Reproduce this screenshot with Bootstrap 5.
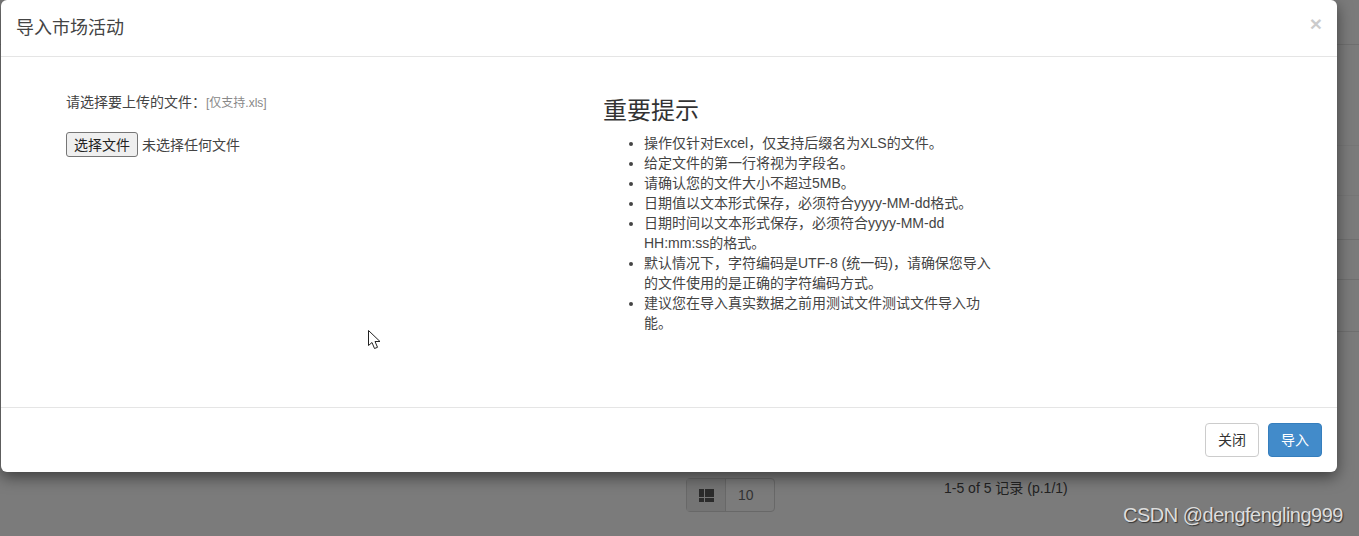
<!DOCTYPE html>
<html lang="zh-CN">
<head>
<meta charset="utf-8">
<title>导入市场活动</title>
<link href="https://cdn.jsdelivr.net/npm/bootstrap@5.3.0/dist/css/bootstrap.min.css" rel="stylesheet">
<style>
html,body{height:536px;overflow:hidden}
body{background:#7b7b7b;font-family:"Liberation Sans","Noto Sans CJK SC",sans-serif;font-size:14px;line-height:20px;color:#333}
.back-page{height:536px}
.back-row{border-bottom:1px solid #6f6f6f}
.back-r1{height:45px}.back-r2{height:101px;border-color:#767676}.back-r3{height:50px;border-color:#767676}.back-r4{height:44px}.back-r5{height:40px}
.back-pager-row{height:252px;border-bottom:0;padding-left:686px;padding-top:198px}
.back-line{height:1px;background:#6f6f6f;margin-top:-201px}
.pager-box{width:89px;height:34px;border:1px solid #686868;border-radius:4px;color:#333;font-size:14px}
.pager-ico{width:39px;border-right:1px solid #686868;background:#747474}
.pager-num{padding-left:12px}
.pager-info{margin-left:169px;font-size:14px;color:#222;white-space:nowrap}
.dlg{position:absolute;left:1px;top:0;width:1336px;height:472px;background:#fff;border:0;border-radius:6px;box-shadow:0 5px 15px rgba(0,0,0,.5)}
.dlg-head{height:57px;padding:0 15px;border-bottom:1px solid #e5e5e5}
.dlg-title{font-size:18px;line-height:20px;font-weight:400;color:#444;margin:0}
.dlg-x{background:none;border:0;padding:0;font-size:21px;font-weight:700;line-height:1;color:#000;opacity:.2;margin-top:-9px}
.dlg-body{height:350px;padding:0}
.col-left{width:602px;padding:35px 0 0 65px}
.col-right{width:400px;padding-top:35px}
.up-label{margin:0 0 20px;height:20px;color:#444}
.up-hint{font-size:12px;color:#888}
.file-btn{width:72px;height:25px;padding:0;background:#efefef;border:1px solid #767676;border-radius:3px;font-size:14px;line-height:22px;color:#222}
.file-none{margin-left:4px;font-size:14px;color:#444}
.tip-title{font-size:24px;line-height:30px;font-weight:400;margin:4px 0 7px;color:#333}
.tip-list{margin:0;padding-left:41px;width:389px;color:#444}
.dlg-foot{height:65px;padding:0 15px 0 0;border-top:1px solid #e5e5e5;gap:9px}
.foot-btn{width:54px;height:34px;padding:0;font-size:14px;line-height:32px;border-radius:4px;border:1px solid #ccc;background:#fff;color:#333}
.foot-primary{background:#428bca;border-color:#357ebd;color:#fff}
.mouse-ptr{position:absolute;left:368px;top:330px}
.wm{position:absolute;left:1123px;top:502px;font-size:20px;line-height:26px;letter-spacing:-.5px;color:#ddd;text-shadow:1px 1px 1px #333;white-space:nowrap;font-family:"Liberation Sans",sans-serif}
</style>
</head>
<body>
<div class="back-page">
  <div class="back-row back-r1"></div>
  <div class="back-row back-r2"></div>
  <div class="back-row back-r3"></div>
  <div class="back-row back-r4"></div>
  <div class="back-row back-r5"></div>
  <div class="back-pager-row d-flex align-items-start">
    <div class="pager-box d-flex align-items-stretch">
      <div class="pager-ico d-flex align-items-center justify-content-center">
        <svg width="15" height="13" viewBox="0 0 15 13" fill="#2b2b2b"><rect x="0" y="0" width="5" height="8"/><rect x="6" y="0" width="9" height="8"/><rect x="0" y="9" width="5" height="4"/><rect x="6" y="9" width="9" height="4"/></svg>
      </div>
      <div class="pager-num d-flex align-items-center">10</div>
    </div>
    <div class="pager-info">1-5 of 5 记录 (p.1/1)</div>
  </div>
  <div class="back-line"></div>
</div>

<div class="dlg modal-content">
  <div class="dlg-head d-flex align-items-center justify-content-between">
    <h4 class="dlg-title">导入市场活动</h4>
    <button type="button" class="dlg-x" aria-label="Close">×</button>
  </div>
  <div class="dlg-body d-flex">
    <div class="col-left">
      <p class="up-label">请选择要上传的文件：<small class="up-hint">[仅支持.xls]</small></p>
      <div class="d-flex align-items-center">
        <button type="button" class="file-btn">选择文件</button><span class="file-none">未选择任何文件</span>
      </div>
    </div>
    <div class="col-right">
      <h3 class="tip-title">重要提示</h3>
      <ul class="tip-list">
        <li>操作仅针对Excel，仅支持后缀名为XLS的文件。</li>
        <li>给定文件的第一行将视为字段名。</li>
        <li>请确认您的文件大小不超过5MB。</li>
        <li>日期值以文本形式保存，必须符合yyyy-MM-dd格式。</li>
        <li>日期时间以文本形式保存，必须符合yyyy-MM-dd HH:mm:ss的格式。</li>
        <li>默认情况下，字符编码是UTF-8 (统一码)，请确保您导入的文件使用的是正确的字符编码方式。</li>
        <li>建议您在导入真实数据之前用测试文件测试文件导入功能。</li>
      </ul>
    </div>
  </div>
  <div class="dlg-foot d-flex align-items-center justify-content-end">
    <button type="button" class="btn foot-btn">关闭</button>
    <button type="button" class="btn foot-btn foot-primary">导入</button>
  </div>
</div>

<svg class="mouse-ptr" width="13" height="20" viewBox="0 0 13 20"><path d="M.5.5V15.5L4 12.5L6.5 18.5L9.5 17.3L7 11.5H12Z" fill="#fff" stroke="#222" stroke-width="1"/></svg>
<div class="wm">CSDN @dengfengling999</div>

<script src="https://cdn.jsdelivr.net/npm/bootstrap@5.3.0/dist/js/bootstrap.bundle.min.js"></script>
</body>
</html>
